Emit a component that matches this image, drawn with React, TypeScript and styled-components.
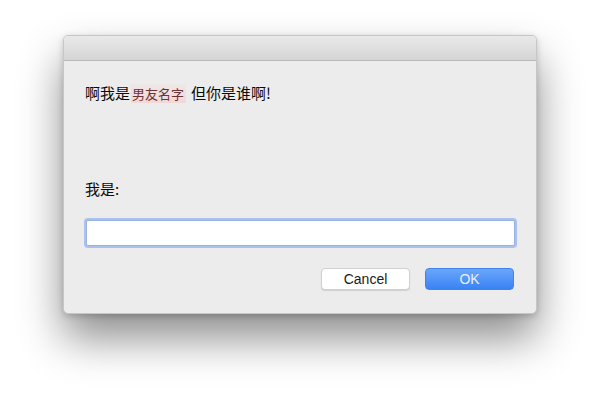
import styled, { createGlobalStyle } from "styled-components";

const GlobalStyle = createGlobalStyle`
    html, body {
        margin: 0;
        padding: 0;
        background: #ffffff;
    }
    body {
        font-family: "Liberation Sans", "Noto Sans CJK SC", sans-serif;
        -webkit-font-smoothing: antialiased;
    }
`;

const Stage = styled.div`
    width: 600px;
    height: 404px;
    box-sizing: border-box;
    padding: 35px 0 0 63px;
    overflow: hidden;
`;

const Dialog = styled.div`
    width: 474px;
    height: 279px;
    box-sizing: border-box;
    display: flex;
    flex-direction: column;
    background: #ececec;
    border: 1px solid #c6c6c6;
    border-radius: 5px;
    box-shadow: 0 24px 44px rgba(0, 0, 0, 0.45), 0 2px 6px rgba(0, 0, 0, 0.18);
    overflow: hidden;
`;

const TitleBar = styled.div`
    height: 24px;
    flex-shrink: 0;
    background: linear-gradient(#e9e9e9, #d4d4d4);
    border-bottom: 1px solid #b8b8b8;
`;

const Body = styled.div`
    flex: 1;
    display: flex;
    flex-direction: column;
    padding: 22px 21px 23px 21px;
`;

const Message = styled.p`
    margin: 0;
    font-family: "Noto Sans CJK SC", "Liberation Sans", sans-serif;
    font-size: 15px;
    line-height: 20px;
    color: #0a0a0a;
`;

const Name = styled.span`
    color: #6a3434;
    font-size: 13px;
    background: linear-gradient(rgba(255, 200, 200, 0.15), rgba(250, 190, 190, 0.45));
    padding: 0 2px 0 1px;
    margin: 0 5px 0 1px;
`;

const Label = styled.label`
    margin-top: 75px;
    font-family: "Noto Sans CJK SC", "Liberation Sans", sans-serif;
    font-size: 15px;
    line-height: 20px;
    color: #0a0a0a;
`;

const Field = styled.input`
    margin: 21px 0 0 1px;
    height: 26px;
    width: 429px;
    box-sizing: border-box;
    border: 1px solid #9ab3e6;
    border-radius: 2px;
    background: #ffffff;
    box-shadow: 0 0 0 2px #aac1ee;
    outline: none;
    font-size: 13px;
`;

const Actions = styled.div`
    margin-top: auto;
    display: flex;
    justify-content: flex-end;
    gap: 15px;
    padding-right: 1px;
`;

const Button = styled.button<{ $primary?: boolean }>`
    width: 89px;
    height: 22px;
    border-radius: 4px;
    font-family: "Liberation Sans", sans-serif;
    font-size: 14px;
    padding: 0;
    cursor: pointer;
    border: ${(p) => (p.$primary ? "1px solid #3f84ee" : "1px solid #d0d0d0")};
    background: ${(p) => (p.$primary ? "linear-gradient(#6aa6fb, #3a83f4)" : "#ffffff")};
    color: ${(p) => (p.$primary ? "#e9f1ff" : "#1a1a1a")};
    box-shadow: ${(p) => (p.$primary ? "none" : "0 1px 1px rgba(0,0,0,0.12)")};
`;

export default function App() {
    return (
        <>
            <GlobalStyle />
            <Stage>
                <Dialog>
                    <TitleBar />
                    <Body>
                        <Message>
                            啊我是<Name>男友名字</Name>但你是谁啊!
                        </Message>
                        <Label htmlFor="who">我是:</Label>
                        <Field id="who" type="text" />
                        <Actions>
                            <Button>Cancel</Button>
                            <Button $primary>OK</Button>
                        </Actions>
                    </Body>
                </Dialog>
            </Stage>
        </>
    );
}
